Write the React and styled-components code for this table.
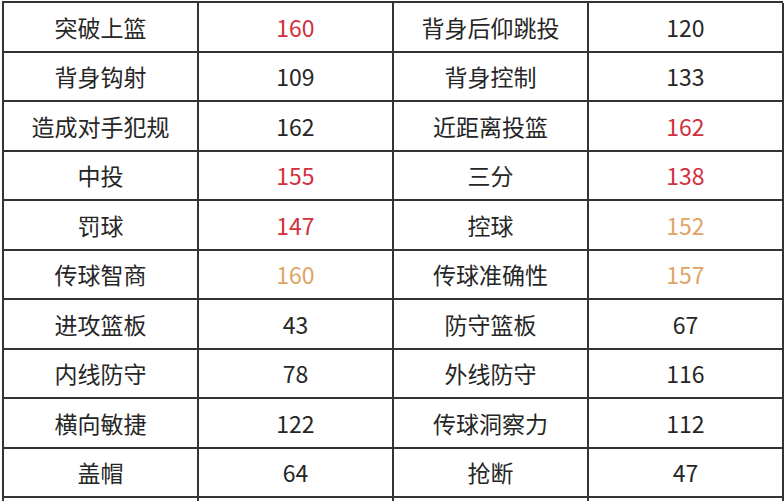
import React from "react";
import { styled, createGlobalStyle } from "styled-components";

const RED = "#d2303c";
const GOLD = "#dfa465";
const TEXT = "#262626";
const LINE = "#333333";

const stats = [
    ["突破上篮", 160, "red", "背身后仰跳投", 120, null],
    ["背身钩射", 109, null, "背身控制", 133, null],
    ["造成对手犯规", 162, null, "近距离投篮", 162, "red"],
    ["中投", 155, "red", "三分", 138, "red"],
    ["罚球", 147, "red", "控球", 152, "gold"],
    ["传球智商", 160, "gold", "传球准确性", 157, "gold"],
    ["进攻篮板", 43, null, "防守篮板", 67, null],
    ["内线防守", 78, null, "外线防守", 116, null],
    ["横向敏捷", 122, null, "传球洞察力", 112, null],
    ["盖帽", 64, null, "抢断", 47, null],
];

const Global = createGlobalStyle`
    html, body {
        margin: 0;
        padding: 0;
        background: #ffffff;
        overflow: hidden;
    }
`;

const Page = styled.div`
    padding: 1px 0 0 2px;
    width: 784px;
    height: 501px;
    box-sizing: border-box;
    overflow: hidden;
    font-family: "Microsoft YaHei", "Noto Sans CJK SC", "Noto Sans", sans-serif;
`;

const Grid = styled.div`
    display: grid;
    grid-template-columns: repeat(4, 195px);
    grid-auto-rows: 49.5px;
    width: 781px;
    border-top: 2px solid ${LINE};
    border-left: 2px solid ${LINE};
    box-sizing: border-box;
`;

const Cell = styled.div`
    display: flex;
    align-items: center;
    justify-content: center;
    border-right: 2px solid ${LINE};
    border-bottom: 2px solid ${LINE};
    font-size: 23px;
    color: ${props => props.tone === "red" ? RED : props.tone === "gold" ? GOLD : TEXT};
    white-space: nowrap;
`;

const App = () => {
    return (
        <Page>
            <Global />
            <Grid>
                {stats.map(([a, av, at, b, bv, bt]) => (
                    <React.Fragment key={a}>
                        <Cell>{a}</Cell>
                        <Cell tone={at}>{av}</Cell>
                        <Cell>{b}</Cell>
                        <Cell tone={bt}>{bv}</Cell>
                    </React.Fragment>
                ))}
                <Cell />
                <Cell />
                <Cell />
                <Cell />
            </Grid>
        </Page>
    );
};

export default App;
